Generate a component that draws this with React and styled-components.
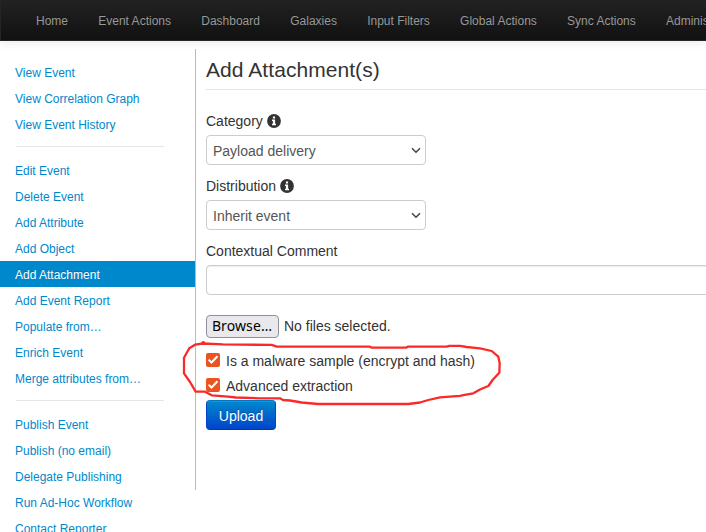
import React from "react";
import styled, { createGlobalStyle, css } from "styled-components";

const GlobalStyle = createGlobalStyle`
  * { box-sizing: border-box; }
  html, body { margin: 0; background: #fff; }
  body {
    height: 532px;
    overflow: hidden;
    font-family: "Liberation Sans", Arial, sans-serif;
    font-size: 14px;
    line-height: 20px;
    color: #333;
  }
`;

const Page = styled.div`
  position: relative;
  height: 532px;
  overflow: hidden;
`;

const Navbar = styled.nav`
  display: flex;
  height: 41px;
  padding-left: 20px;
  overflow: hidden;
  background: linear-gradient(to bottom, #222, #111);
  border-bottom: 1px solid #252525;
  border-left: 1px solid #252525;
  box-shadow: 0 1px 10px rgba(0, 0, 0, 0.1);
`;

const NavItem = styled.a`
  flex: none;
  padding: 11px 15.25px 9px 15px;
  font-size: 12px;
  line-height: 20px;
  color: #999;
  text-shadow: 0 -1px 0 rgba(0, 0, 0, 0.25);
`;

const Layout = styled.div`
  display: flex;
  align-items: flex-start;
  padding-top: 8px;
`;

const Sidebar = styled.aside`
  flex: none;
  width: 196px;
  height: 441px;
  padding-top: 10px;
  border-right: 1px solid #bbb;
`;

const SideLink = styled.a`
  display: block;
  height: 26px;
  padding: 1px 15px 0;
  font-size: 12px;
  line-height: 26px;
  white-space: nowrap;
  color: #08c;
  ${(p) => p.$active && css`
    color: #fff;
    background: #08c;
    text-shadow: 0 -1px 0 rgba(0, 0, 0, 0.2);
  `}
`;

const Divider = styled.hr`
  width: 148px;
  height: 1px;
  margin: 9px 0 10px 16px;
  border: 0;
  background: #e5e5e5;
`;

const Form = styled.form`
  flex: none;
  width: 600px;
  padding-left: 10px;
`;

const Title = styled.h1`
  height: 41px;
  margin: 0 0 21px;
  font-size: 21px;
  line-height: 41px;
  font-weight: normal;
  letter-spacing: 0.06px;
  border-bottom: 1px solid #e5e5e5;
`;

const Label = styled.label`
  display: flex;
  align-items: center;
  gap: 4px;
  height: 20px;
  margin-bottom: 4px;
`;

const SelectBox = styled.div`
  display: flex;
  align-items: center;
  justify-content: space-between;
  width: 220px;
  height: 30px;
  margin-bottom: 11px;
  padding: 2px 4px 0 6px;
  border: 1px solid #ccc;
  border-radius: 4px;
  color: #555;

  svg { margin-top: -2px; }
`;

const TextInput = styled.input`
  display: block;
  width: 560px;
  height: 30px;
  margin: 0 0 20px;
  border: 1px solid #ccc;
  border-radius: 4px;
  box-shadow: inset 0 1px 1px rgba(0, 0, 0, 0.075);
`;

const FileRow = styled.div`
  display: flex;
  align-items: center;
  gap: 5px;
  height: 23px;
  margin-bottom: 13px;
  line-height: 18px;
  padding-bottom: 1px;
`;

const BrowseButton = styled.button`
  width: 73px;
  height: 23px;
  padding: 0 1px 1px 0;
  border: 1px solid #8f8f9d;
  border-radius: 4px;
  background: #e9e9ed;
  color: #000;
  font: 14px/20px "Noto Sans", sans-serif;
  letter-spacing: 0.1px;
`;

const CheckRow = styled.label`
  display: flex;
  align-items: center;
  gap: 6px;
  height: 20px;
  margin-bottom: 5px;

  svg { margin-top: -2px; }
`;

const UploadButton = styled.button`
  display: block;
  width: 70px;
  height: 30px;
  margin-top: -1px;
  padding: 1px 0 0;
  border: 1px solid;
  border-color: #0077c4 #0044cc #003ca8;
  border-radius: 4px;
  background: linear-gradient(to bottom, #08c, #04c);
  box-shadow: inset 0 1px 0 rgba(255, 255, 255, 0.12);
  color: #fff;
  font: 14px/20px "Liberation Sans", Arial, sans-serif;
  text-shadow: 0 -1px 0 rgba(0, 0, 0, 0.25);
`;

const Highlight = styled.svg`
  position: absolute;
  left: 0;
  top: 0;
  pointer-events: none;
`;

const InfoIcon = () => (
  <svg width="14" height="14" viewBox="0 0 14 14">
    <circle cx="7" cy="7" r="6.9" fill="#333" />
    <path d="M5.9 2.4h2.2v2H5.9zM5 5.6h3.1v4.2H9v1.4H5V9.8h.9V7H5z" fill="#fff" />
  </svg>
);

const Chevron = () => (
  <svg width="10" height="8" viewBox="0 0 10 8">
    <path d="M1 2.2L5 6.2 9 2.2" fill="none" stroke="#444" strokeWidth="1.5" />
  </svg>
);

const Checkbox = () => (
  <svg width="14" height="14" viewBox="0 0 14 14">
    <rect width="14" height="14" rx="2" fill="#e95420" />
    <path d="M2.6 6.6L5.5 9.5 11.5 3.3" fill="none" stroke="#fff" strokeWidth="2" />
  </svg>
);

const navItems = ["Home", "Event Actions", "Dashboard", "Galaxies", "Input Filters", "Global Actions", "Sync Actions", "Administration"];

const sideGroups = [
  ["View Event", "View Correlation Graph", "View Event History"],
  ["Edit Event", "Delete Event", "Add Attribute", "Add Object", "Add Attachment", "Add Event Report", "Populate from…", "Enrich Event", "Merge attributes from…"],
  ["Publish Event", "Publish (no email)", "Delegate Publishing", "Run Ad-Hoc Workflow", "Contact Reporter"],
];

export default function App() {
  return (
    <Page>
      <GlobalStyle />
      <Navbar>
        {navItems.map((t) => <NavItem key={t}>{t}</NavItem>)}
      </Navbar>
      <Layout>
        <Sidebar>
          {sideGroups.map((group, i) => (
            <React.Fragment key={i}>
              {i > 0 && <Divider />}
              {group.map((t) => (
                <SideLink key={t} $active={t === "Add Attachment"}>{t}</SideLink>
              ))}
            </React.Fragment>
          ))}
        </Sidebar>
        <Form>
          <Title>Add Attachment(s)</Title>
          <Label>Category <InfoIcon /></Label>
          <SelectBox>Payload delivery <Chevron /></SelectBox>
          <Label>Distribution <InfoIcon /></Label>
          <SelectBox>Inherit event <Chevron /></SelectBox>
          <Label>Contextual Comment</Label>
          <TextInput />
          <FileRow>
            <BrowseButton type="button">Browse…</BrowseButton>
            No files selected.
          </FileRow>
          <CheckRow><Checkbox />Is a malware sample (encrypt and hash)</CheckRow>
          <CheckRow><Checkbox />Advanced extraction</CheckRow>
          <UploadButton type="button">Upload</UploadButton>
        </Form>
      </Layout>
      <Highlight width="706" height="532" viewBox="0 0 706 532">
        <path
          d="M203 343.5L195 344.7 189.3 348.3 184 357.7V373.3L190 382 195.7 391.7H205L211.7 395.3 228 396.7 236 397.5 260 398.3H280L283 400 290 400.5 301.7 402.5 318 404H408.3L420 402.5 428.3 400 440 397.3 460 395.8 463.3 395.2 473.3 393.3 480 389.5 488.3 386 493 379.5 499.3 372.7 499.7 363.3 498.3 356.7 491.7 351 480 348.3 466.7 347 460 345.8H449.3L446.7 346.7H407.7L406 347.7H371.7L370 346.7H276.7L271.7 344.9 240 344.6 223 344.3 203 343.5Z"
          fill="none"
          stroke="#fb2a2a"
          strokeWidth="2.3"
          strokeLinejoin="round"
        />
        <circle cx="203.3" cy="343" r="2" fill="#fb2a2a" />
      </Highlight>
    </Page>
  );
}
